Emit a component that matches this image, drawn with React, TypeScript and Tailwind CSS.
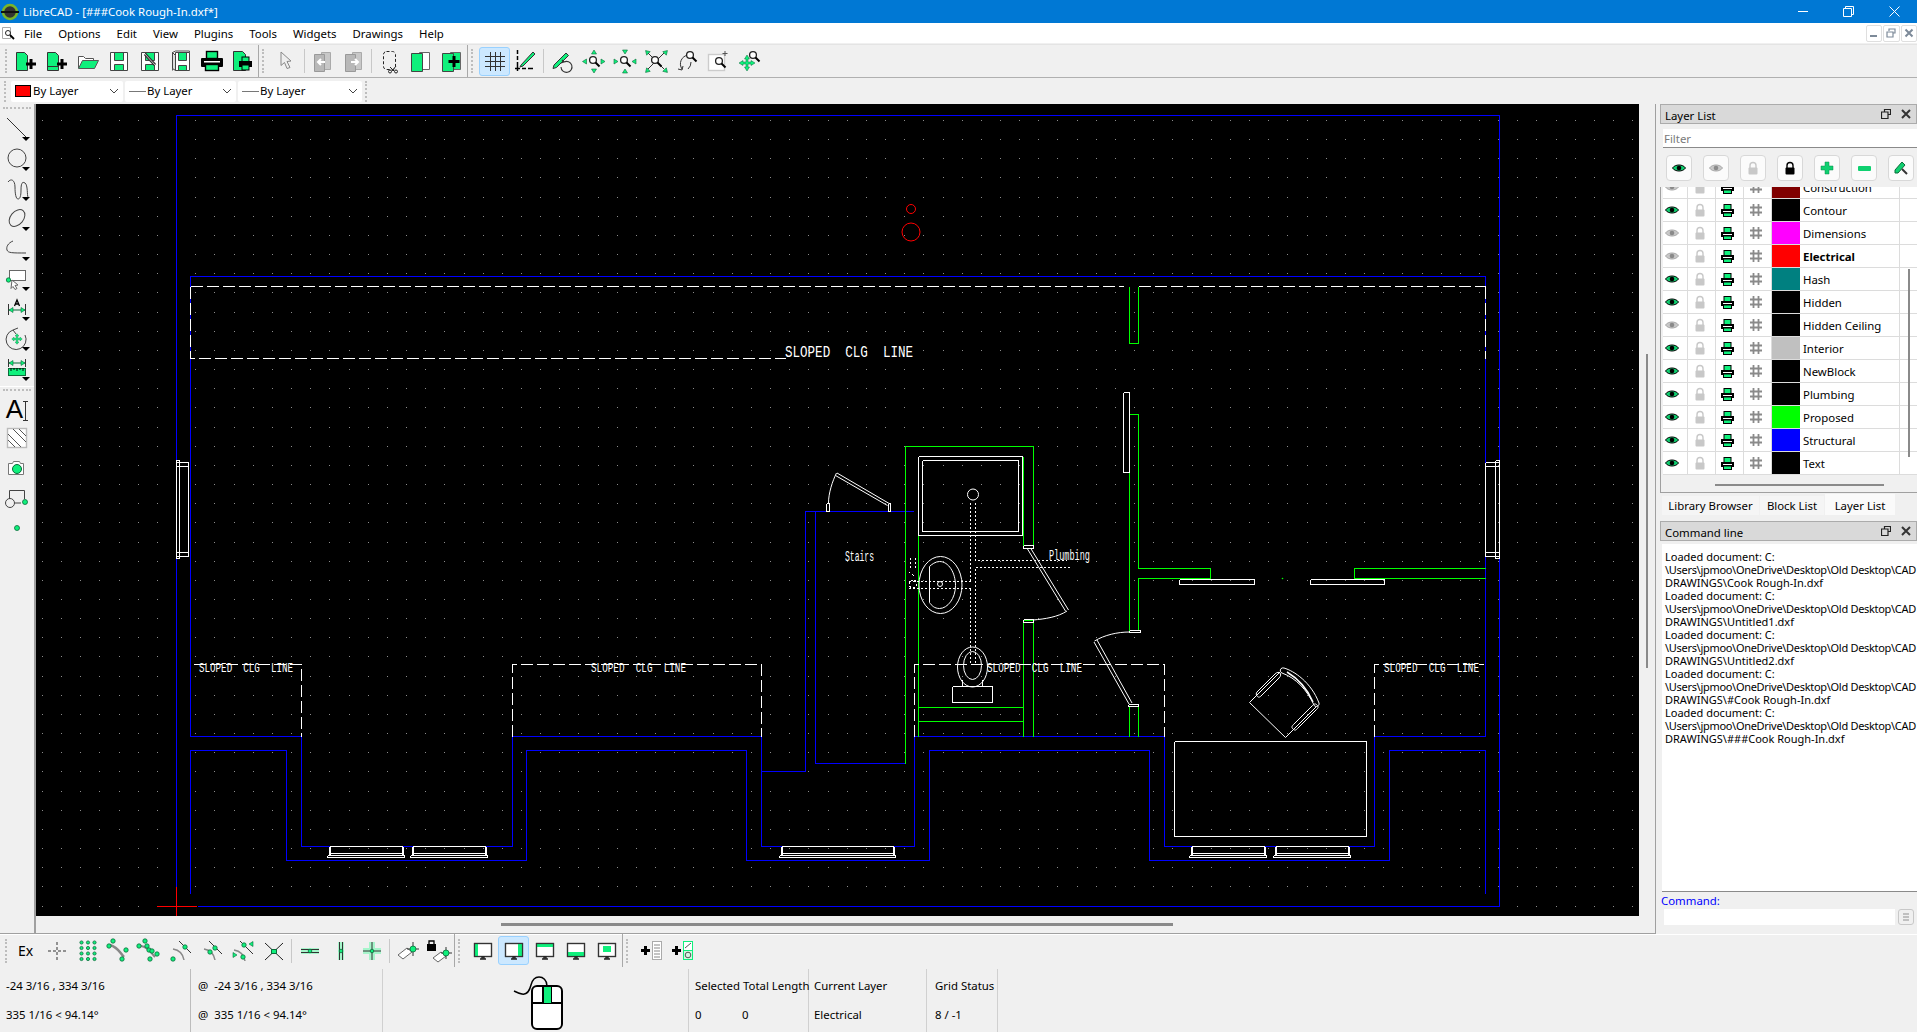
import React from 'react';

const G = '#0ff07c';
const BLUE = '#0000ff';
const GREEN = '#00ff00';
const WHITE = '#ffffff';

// ---- toolbar icons ----
const Ico = ({ children, w = 28, h = 28 }: { children: React.ReactNode; w?: number; h?: number }) => (
  <svg width={w} height={h} viewBox={`0 0 ${w} ${h}`} fill="none" className="block">
    {children}
  </svg>
);

const Dot = ({ x, y, r = 2.2 }: { x: number; y: number; r?: number }) => (
  <circle cx={x} cy={y} r={r} fill={G} stroke="#0b6b3a" strokeWidth="0.8" />
);

const Plus = ({ x = 18, y = 17 }: { x?: number; y?: number }) => (
  <path d={`M${x} ${y - 5}v10M${x - 5} ${y}h10`} stroke="#000" strokeWidth="3" />
);

const Floppy = () => (
  <>
    <path d="M5.5 5.5h17v18h-17z" fill="#fff" stroke="#444" />
    <path d="M9.5 5.5h9v8h-9z" fill={G} stroke="#444" />
    <path d="M9.5 17.5h9v6h-9z" fill={G} stroke="#444" />
  </>
);

const Mag = ({ x, y }: { x: number; y: number }) => (
  <>
    <circle cx={x} cy={y} r="3.4" fill="#fff" stroke="#222" strokeWidth="1.3" />
    <path d={`M${x + 2.5} ${y + 2.5}l4 4`} stroke="#000" strokeWidth="2" />
  </>
);

const Tri = ({ x, y, r = 0 }: { x: number; y: number; r?: number }) => (
  <path d="M-2.5 2L2.5 2L0 -2z" transform={`translate(${x} ${y}) rotate(${r})`} fill={G} stroke="#0b6b3a" strokeWidth="0.6" />
);

const Screen = ({ children }: { children?: React.ReactNode }) => (
  <>
    <rect x="5.5" y="6.5" width="17" height="13" fill="#fff" stroke="#333" strokeWidth="1.2" />
    {children}
    <rect x="5.5" y="6.5" width="17" height="13" stroke="#333" strokeWidth="1.2" />
    <path d="M11 22h6M13 20h2v2h-2z" stroke="#222" strokeWidth="1.4" />
  </>
);

const icons: Record<string, React.ReactNode> = {
  newFile: (
    <>
      <path d="M4.5 5.5h8l3 3v15h-11z" fill={G} stroke="#333" />
      <Plus x={19} y={17} />
    </>
  ),
  newTpl: (
    <>
      <path d="M4.5 5.5h8l3 3v15h-11z" fill={G} stroke="#333" />
      <path d="M4.5 19.5h11" stroke="#333" />
      <Plus x={19} y={17} />
    </>
  ),
  open: (
    <>
      <path d="M4.5 21V9.5h5l2 2h8v2" stroke="#555" fill="#fff" />
      <path d="M4.5 21.5l4-8h16l-4 8z" fill={G} stroke="#555" />
    </>
  ),
  save: <Floppy />,
  saveAs: (
    <>
      <Floppy />
      <path d="M9 7l10 11" stroke="#333" strokeWidth="3" />
      <path d="M9 7l10 11" stroke="#bbb" strokeWidth="1" />
    </>
  ),
  saveAll: (
    <>
      <path d="M5.5 5.5l3-1.5h14v1.5M5.5 5.5v18" stroke="#555" />
      <path d="M8.5 5.5h14v18h-14z" fill="#fff" stroke="#444" />
      <path d="M11.5 5.5h8v8h-8z" fill={G} stroke="#444" />
      <path d="M11.5 18.5h8v5h-8z" fill={G} stroke="#444" />
      <path d="M5.5 5.5l3 3v15l-3-2z" fill="#ddd" stroke="#444" />
    </>
  ),
  print: (
    <>
      <rect x="8.5" y="4.5" width="11" height="7" fill={G} stroke="#000" strokeWidth="1.4" />
      <rect x="3" y="11" width="22" height="9" rx="1" fill="#000" />
      <rect x="6" y="14" width="16" height="1.5" fill="#fff" />
      <rect x="7.5" y="17.5" width="13" height="6" fill={G} stroke="#000" strokeWidth="1.4" />
    </>
  ),
  preview: (
    <>
      <path d="M4.5 4.5h9l3 3v16h-12z" fill={G} stroke="#333" />
      <rect x="13" y="10" width="7" height="5" fill={G} stroke="#000" />
      <rect x="10" y="14" width="13" height="6" fill="#000" />
      <rect x="13" y="18" width="7" height="5" fill={G} stroke="#000" />
    </>
  ),
  select: <path d="M8 5l10 9-4 .5 3 6-3 1-2.500-6-3.500 3z" fill="#eee" stroke="#888" />,
  prevW: (
    <>
      <path d="M12.500 5.500h9v17h-9z" fill="#c8c8c8" stroke="#aaa" />
      <path d="M5.500 7.500h10v17h-10z" fill="#b8b8b8" stroke="#999" />
      <path d="M16 15h-6M12 12l-3 3 3 3" stroke="#fff" strokeWidth="2" />
    </>
  ),
  nextW: (
    <>
      <path d="M12.500 5.500h9v17h-9z" fill="#c8c8c8" stroke="#aaa" />
      <path d="M5.500 7.500h10v17h-10z" fill="#b8b8b8" stroke="#999" />
      <path d="M11 15h6M15 12l3 3-3 3" stroke="#fff" strokeWidth="2" />
    </>
  ),
  cut: (
    <>
      <rect x="7.500" y="4.500" width="12" height="18" rx="3" stroke="#222" strokeDasharray="3 2" />
      <path d="M14 20l4 4M20 19l-4 5" stroke="#222" />
      <circle cx="14" cy="24.500" r="1.500" stroke="#222" />
      <circle cx="20" cy="24.500" r="1.500" stroke="#222" />
    </>
  ),
  book: (
    <>
      <path d="M12.500 5.500h10v17h-10z" fill="#fff" stroke="#666" />
      <path d="M4.500 6.500h11v18h-11z" fill={G} stroke="#444" />
    </>
  ),
  bookAdd: (
    <>
      <path d="M12.500 5.500h10v17h-10z" fill={G} stroke="#666" />
      <path d="M4.500 6.500h11v18h-11z" fill={G} stroke="#444" />
      <path d="M16 9v11M10.500 14.500h11" stroke="#000" strokeWidth="3" />
    </>
  ),
  grid: <path d="M9.500 5v19M14.500 5v19M19.500 5v19M4 9.500h20M4 14.500h20M4 19.500h20" stroke="#333" />,
  ortho: (
    <>
      <path d="M5.500 3v4M5.500 9v4M5.500 15v4" stroke="#000" strokeWidth="1.5" />
      <path d="M3 21.500h5M5.500 19v5M10 21.500h4M16 21.500h5" stroke="#000" strokeWidth="1.5" />
      <path d="M9 18l12-13 2 2-12 12-3 1z" fill={G} stroke="#333" />
    </>
  ),
  redraw: (
    <>
      <path d="M5 18L17 6l2.500 2.500-12 12-3.500 1z" fill={G} stroke="#333" />
      <path d="M15 15a5.500 5.500 0 1 1-3 5M15 15l-2-2M15 15l-3 1" stroke="#333" strokeWidth="1.100" />
    </>
  ),
  zAuto: (
    <>
      <Tri x={14} y={5} />
      <Tri x={14} y={24} r={180} />
      <Tri x={4.500} y={14.500} r={-90} />
      <Tri x={23} y={14.500} r={90} />
      <Mag x={13} y={13} />
    </>
  ),
  zWin: (
    <>
      <Tri x={14} y={5} r={180} />
      <Tri x={14} y={24} />
      <Tri x={5} y={14.500} r={90} />
      <Tri x={23} y={14.500} r={-90} />
      <Mag x={13} y={13} />
    </>
  ),
  zOut: (
    <>
      <Tri x={5} y={5} r={-45} />
      <Tri x={24} y={5} r={45} />
      <Tri x={5} y={24} r={-135} />
      <Tri x={24} y={24} r={135} />
      <path d="M6 6l16 16M22 6L6 22" stroke="#333" />
      <Mag x={13} y={13} />
    </>
  ),
  zPrev: (
    <>
      <path d="M9 22a9 9 0 0 1 6-14M5 22l4 1 1-4M15 22a9 9 0 0 0 3-7" stroke="#333" />
      <Mag x={17} y={8} />
    </>
  ),
  zRect: (
    <>
      <rect x="4.500" y="7.500" width="16" height="16" fill="#fff" stroke="#ccc" strokeWidth="1.400" />
      <Mag x={15} y={14} />
      <path d="M21 4v5M18.500 6.500h5" stroke="#555" />
    </>
  ),
  zPan: (
    <>
      <path d="M12 8l2.500 4h-1.500v3h3v-1.500l4 2.500-4 2.500V17h-3v3h1.500L12 24l-2.500-4H11v-3H8v1.500L4 16l4-2.500V15h3v-3H9.500z" fill={G} stroke="#0b6b3a" strokeWidth=".5" />
      <Mag x={18} y={8} />
    </>
  ),
  // left toolbar
  line: <path d="M4 3l19 19" stroke="#333" />,
  circle: <circle cx="14" cy="13" r="9" stroke="#444" />,
  spline: <path d="M5 7c3-4 7-2 7 5s1 12 3 12 3-3 3-9 1-9 4-7 2 13 3 14" stroke="#444" />,
  ellipse: <ellipse cx="14" cy="13" rx="6.500" ry="9.500" transform="rotate(40 14 13)" stroke="#444" />,
  polyline: <path d="M10 6c-5 2-7 6-6 9s5 3 19 3" stroke="#444" />,
  selects: (
    <>
      <rect x="6.500" y="5.500" width="16" height="10" fill="#fff" stroke="#666" />
      <path d="M9 15l6 5-3 .5 2 3-2 1-2-3-2 2z" fill="#fff" stroke="#666" />
      <Dot x={5.500} y={15} />
    </>
  ),
  dim: (
    <>
      <path d="M5.500 9v11M22.500 9v11" stroke="#333" />
      <path d="M6 15h16" stroke="#0b6b3a" />
      <Tri x={8} y={15} r={-90} />
      <Tri x={20} y={15} r={90} />
      <path d="M11.500 11l2.500-6 2.500 6M12.500 9h3" stroke="#000" strokeWidth="1.300" />
    </>
  ),
  modify: (
    <>
      <path d="M10 5a10 10 0 1 0 12 5M10 5l5-2M10 5l3 4" stroke="#444" />
      <g transform="translate(3.500 3.500) scale(.75)">
        <path d="M14 7l2.500 3h-1.500v3h3v-1.500l3 2.500-3 2.500V15h-3v3h1.500L14 21l-2.500-3H13v-3h-3v1.500L7 14l3-2.500V13h3v-3h-1.500z" fill={G} stroke="#0b6b3a" strokeWidth=".5" />
      </g>
    </>
  ),
  measure: (
    <>
      <path d="M5.500 4v8M22.500 4v8" stroke="#333" />
      <path d="M6 8h16" stroke="#0b6b3a" />
      <Tri x={8} y={8} r={-90} />
      <Tri x={20} y={8} r={90} />
      <rect x="5.500" y="13.500" width="17" height="7" fill={G} stroke="#0b6b3a" />
      <path d="M8 13v3M11 13v2M14 13v3M17 13v2M20 13v3" stroke="#000" />
    </>
  ),
  hatch: (
    <>
      <rect x="4.500" y="4.500" width="19" height="19" fill="#fff" stroke="#bbb" strokeWidth="1.400" />
      <path d="M5 10l13 13M5 16l7 7M10 5l13 13M16 5l7 7" stroke="#555" />
    </>
  ),
  image: (
    <>
      <path d="M5.500 9.500h4l1-2h6l1 2h3v11h-15z" fill="#fff" stroke="#777" />
      <circle cx="14" cy="15" r="4.500" fill={G} stroke="#0b6b3a" />
    </>
  ),
  block: (
    <>
      <path d="M6.500 15V6.500h15V15M12 19h6" stroke="#444" />
      <circle cx="7" cy="19" r="4.500" stroke="#444" />
      <Dot x={22} y={18} r={2.500} />
    </>
  ),
  point: <Dot x={14} y={14} r={2.500} />,
  // snap bar
  free: <path d="M14 5v3M14 10v3M14 15v3M14 20v3M5 14h3M10 14h3M15 14h3M20 14h3" stroke="#333" />,
  snapGrid: (
    <>
      {[7.5, 14, 20.5].flatMap((x) => [5.5, 11, 16.5, 22].map((y) => <Dot key={`${x}-${y}`} x={x} y={y} r={1.6} />))}
    </>
  ),
  endPt: (
    <>
      <path d="M5 8c8 2 10 8 14 12" stroke="#888" strokeWidth="2.500" />
      <Dot x={8} y={4} />
      <Dot x={4} y={9} />
      <Dot x={21} y={13} />
      <Dot x={17} y={22} />
    </>
  ),
  onEnt: (
    <>
      <path d="M5 9c8 1 10 7 14 11" stroke="#888" strokeWidth="2" />
      <Dot x={9} y={4} />
      <Dot x={3} y={9} />
      <Dot x={11} y={9} />
      <Dot x={13} y={13} />
      <Dot x={16} y={14} />
      <Dot x={21} y={17} />
      <Dot x={14} y={22} />
    </>
  ),
  center: (
    <>
      <path d="M6 12c6 1 10 5 11 11" stroke="#888" strokeWidth="1.500" />
      <path d="M12 4l12 12" stroke="#333" />
      <Dot x={18} y={10} />
      <Dot x={6} y={22} />
    </>
  ),
  mid: (
    <>
      <path d="M6 12c6 1 10 5 11 11" stroke="#888" strokeWidth="1.500" />
      <path d="M11 4l13 13" stroke="#333" />
      <Dot x={17} y={11} />
      <Dot x={12} y={15} />
    </>
  ),
  dist: (
    <>
      <path d="M5 13c6 1 10 5 11 11" stroke="#888" strokeWidth="1.500" />
      <path d="M11 4l13 13" stroke="#333" />
      <Dot x={15} y={8} />
      <Dot x={14} y={20} />
      <Tri x={22} y={7} r={-90} />
      <Tri x={6} y={18} r={90} />
    </>
  ),
  cross: (
    <>
      <path d="M5 6l18 17M23 6L5 23" stroke="#222" />
      <rect x="11.500" y="12.500" width="5" height="4" fill={G} stroke="#0b6b3a" />
    </>
  ),
  lockH: (
    <>
      <path d="M5 11h18v6H5z" fill="#a6f5cb" />
      <path d="M5 12.500h18M5 15.500h18" stroke="#333" />
      <Dot x={14} y={14} r={1.800} />
    </>
  ),
  lockV: (
    <>
      <path d="M11 5h6v18h-6z" fill="#a6f5cb" />
      <path d="M12.500 5v18M15.500 5v18" stroke="#333" />
      <Dot x={14} y={14} r={1.800} />
    </>
  ),
  lockO: (
    <>
      <path d="M5 11h18v6H5zM11 5h6v18h-6z" fill="#a6f5cb" />
      <path d="M5 14h18M14 5v18" stroke="#333" />
      <Dot x={14} y={14} r={1.800} />
    </>
  ),
  relZ: (
    <>
      <path d="M4 18l9-7 5 4-9 7z" fill="#fff" stroke="#666" />
      <path d="M13 12h12M19 5v14" stroke="#333" />
      <Dot x={19} y={12} r={3} />
    </>
  ),
  lockZ: (
    <>
      <rect x="2" y="7" width="9" height="7" fill="#000" />
      <path d="M4 7V4h5v3" stroke="#000" strokeWidth="1.300" />
      <path d="M8 21l8-6 5 4-8 6z" fill="#fff" stroke="#666" />
      <path d="M16 16h11M21 10v12" stroke="#333" />
      <Dot x={21} y={16} r={3} />
    </>
  ),
  scrLeft: <Screen><rect x="6" y="7" width="3" height="12" fill={G} /></Screen>,
  scrRight: <Screen><rect x="18" y="7" width="4" height="12" fill={G} /></Screen>,
  scrTop: <Screen><rect x="6" y="7" width="16" height="3" fill={G} /></Screen>,
  scrBottom: <Screen><rect x="6" y="15" width="16" height="4" fill={G} /></Screen>,
  scrCenter: <Screen><rect x="10" y="9" width="8" height="6" fill={G} /></Screen>,
  addList: (
    <>
      <path d="M3 13.500h9M7.500 9v9" stroke="#000" strokeWidth="3" />
      <rect x="14.500" y="4.500" width="9" height="18" fill="#fff" stroke="#aaa" />
      <path d="M16 8h6M16 11h6M16 14h6M16 17h6M16 20h6" stroke="#888" />
    </>
  ),
  addDraw: (
    <>
      <path d="M3 13.500h9M7.500 9v9" stroke="#000" strokeWidth="3" />
      <rect x="14.500" y="4.500" width="9" height="9" fill="#fff" stroke={G} />
      <rect x="14.500" y="13.500" width="9" height="9" fill="#d4f5e2" stroke={G} />
      <path d="M16 11l6-5" stroke="#555" />
      <circle cx="19" cy="18" r="2.800" stroke="#555" />
    </>
  ),
};

const Btn = ({ name, active }: { name: string; active?: boolean }) => (
  <div
    className={`flex h-[29px] w-[31px] items-center justify-center rounded-[3px] border ${
      active ? 'border-[#99d1ff] bg-[#cce8ff]' : 'border-transparent'
    }`}
  >
    <Ico>{icons[name]}</Ico>
  </div>
);

const Handle = () => <div className="mx-[3px] h-[24px] w-0 border-l-2 border-dotted border-[#bdbdbd]" />;
const Sep = () => <div className="mx-[2px] h-[24px] w-px bg-[#c8c8c8]" />;
const Bar = () => <div className="h-[33px] w-px bg-[#a8a8a8]" />;

// ---- CAD canvas ----
type Pt = [number, number];
const toD = (pts: Pt[]) =>
  pts.map(([x, y], i) => `${i ? 'L' : 'M'}${Math.round(x) + 0.5} ${Math.round(y) + 0.5}`).join('');
const rect = (x1: number, y1: number, x2: number, y2: number): Pt[] => [
  [x1, y1],
  [x2, y1],
  [x2, y2],
  [x1, y2],
  [x1, y1],
];

const blueLines: Pt[][] = [
  [[197, 906], [1499, 906], [1499, 115], [176, 115], [176, 886]],
  [[190, 736], [190, 276], [1485, 276], [1485, 736]],
  [[190, 736], [301, 736], [301, 846], [512, 846], [512, 736], [761, 736], [761, 846], [914, 846], [914, 736], [1164, 736], [1164, 846], [1374, 846], [1374, 736], [1485, 736]],
  [[190, 893], [190, 750], [286, 750], [286, 860], [526, 860], [526, 750], [746, 750], [746, 860], [929, 860], [929, 750], [1149, 750], [1149, 860], [1389, 860], [1389, 750], [1485, 750], [1485, 893]],
  [[761, 771], [805, 771], [805, 511], [913, 511]],
  [[815, 511], [815, 763], [905, 763]],
];

const greenLines: Pt[][] = [
  [[905, 763], [905, 446], [1033, 446], [1033, 545]],
  [[918, 456], [918, 736]],
  [[1023, 456], [1023, 545]],
  [[1023, 736], [1023, 620], [1033, 620], [1033, 736]],
  [[918, 707], [1023, 707]],
  [[918, 721], [1023, 721]],
  [[1129, 414], [1138, 414], [1138, 568], [1210, 568], [1210, 578], [1138, 578], [1138, 630]],
  [[1129, 447], [1129, 630]],
  [[1129, 706], [1129, 736]],
  [[1138, 706], [1138, 736]],
  [[1129, 286], [1129, 343], [1138, 343], [1138, 286]],
  [[1485, 568], [1354, 568], [1354, 578], [1485, 578]],
];

const whiteLines: Pt[][] = [
  rect(1123, 392, 1129, 472),
  rect(1179, 579, 1254, 584),
  rect(1310, 579, 1384, 584),
  rect(1174, 741, 1366, 836),
  // tub
  rect(918, 456, 1022, 535),
  rect(922, 460, 1018, 531),
  // toilet tank
  rect(952, 686, 992, 702),
  // hinges
  rect(826, 503, 829, 511),
  rect(888, 503, 890, 511),
  rect(1023, 545, 1033, 548),
  rect(1023, 619, 1033, 622),
  rect(1129, 630, 1140, 632),
  rect(1128, 704, 1138, 706),
  // side windows
  rect(1485, 462, 1495, 556),
  rect(1495, 460, 1499, 558),
  rect(1485, 462, 1499, 466),
  rect(1485, 552, 1499, 556),
  rect(188, 462, 179, 556),
  rect(179, 460, 176, 558),
  rect(176, 462, 188, 466),
  rect(176, 552, 188, 556),
];

const bottomWindows: [number, number][] = [
  [327, 404],
  [410, 487],
  [779, 895],
  [1189, 1266],
  [1273, 1350],
];

const gridDots = (() => {
  let d = '';
  for (let i = 0; i < 84; i++) {
    for (let j = 0; j < 42; j++) {
      d += `M${Math.round(42 + 19.16 * i)} ${Math.round(120 + 19.16 * j)}h1v1h-1z`;
    }
  }
  return d;
})();

const CadLabel = ({ x, y, w, size = 13 }: { x: number; y: number; w: number; size?: number }) => (
  <text
    x={x}
    y={y}
    textLength={w}
    lengthAdjust="spacingAndGlyphs"
    fill={WHITE}
    fontSize={size}
    className="whitespace-pre font-['Liberation_Mono',monospace]"
  >
    {'SLOPED  CLG  LINE'}
  </text>
);

const Drawing = () => (
  <svg width="1603" height="812" viewBox="36 104 1603 812" className="block bg-black">
    <path d={gridDots} fill="#8c8c8c" shapeRendering="crispEdges" />
    <g fill="none" shapeRendering="crispEdges">
      {blueLines.map((p, i) => (
        <path key={i} d={toD(p)} stroke={BLUE} />
      ))}
      {greenLines.map((p, i) => (
        <path key={i} d={toD(p)} stroke={GREEN} />
      ))}
      {whiteLines.map((p, i) => (
        <path key={i} d={toD(p)} stroke={WHITE} />
      ))}
      {bottomWindows.map(([a, b], i) => (
        <g key={i} stroke={WHITE}>
          <path d={toD([[a + 2, 846], [b - 2, 846]])} />
          <path d={toD([[a + 2, 846], [a + 2, 855]])} strokeWidth="2" />
          <path d={toD([[b - 2, 846], [b - 2, 855]])} strokeWidth="2" />
          <path d={toD([[a + 2, 853], [b - 2, 853]])} />
          <path d={toD(rect(a, 855, b, 857))} />
        </g>
      ))}
      {/* dashed ceiling lines */}
      <g stroke={WHITE} strokeDasharray="12 4">
        <path d={toD([[190, 286], [1123, 286]])} />
        <path d={toD([[1138, 286], [1485, 286]])} />
        <path d={toD([[190, 286], [190, 358], [785, 358]])} />
        <path d={toD([[1485, 286], [1485, 358]])} />
        <path d={toD([[193, 664], [301, 664], [301, 736]])} />
        <path d={toD([[512, 736], [512, 664], [761, 664], [761, 736]])} />
        <path d={toD([[914, 736], [914, 664], [1164, 664], [1164, 736]])} />
        <path d={toD([[1374, 736], [1374, 664], [1483, 664]])} />
      </g>
      {/* plumbing */}
      <g stroke={WHITE} strokeDasharray="2 2">
        <path d={toD([[970, 502], [970, 580]])} />
        <path d={toD([[970, 588], [970, 664]])} />
        <path d={toD([[975, 502], [975, 560], [1066, 560]])} />
        <path d={toD([[975, 568], [975, 664]])} />
        <path d={toD([[975, 567], [1071, 567]])} />
        <path d={toD([[908, 581], [970, 581]])} />
        <path d={toD([[908, 588], [970, 588]])} />
        <circle cx="913" cy="584" r="4" />
        <path d="M910 558v10M915 558v10M909 572l5 4" />
      </g>
    </g>
    <g fill="none" stroke={WHITE}>
      <circle cx="973" cy="494.500" r="5.500" />
      {/* sink */}
      <ellipse cx="940.500" cy="585" rx="21.500" ry="28.500" />
      <path d="M929.500 566.500c2-2 6-5 10-5 9 0 16 11 16 24s-8 23-16 23c-5 0-8-3-10-6z" />
      <circle cx="940" cy="584" r="2.500" />
      {/* toilet */}
      <ellipse cx="972.500" cy="667" rx="15" ry="20" />
      <ellipse cx="972.500" cy="665.500" rx="9" ry="14" />
      <path d="M962.500 680v6M982.500 680v6" />
      {/* doors */}
      <path d="M837 473l53 31M835.500 475.500l52 30" />
      <path d="M828.500 503c0-10 4-22 8-30" />
      <path d="M1030.500 548l38 62M1027.500 549l38 62" />
      <path d="M1033 620c12-1 25-3 34-9" />
      <path d="M1129.500 632c-12 0-25 3-35 9" />
      <path d="M1094 642l35 62M1097 640l35 63" />
      {/* chair */}
      <path d="M1280 672l-30.500 30.500 36 35 31-31" />
      <path d="M1257 692l18-18c2-2 4-2 5-1s1 3-1 5l-18 18c-2 2-3 1-4 0s-1-3 0-4z" />
      <path d="M1316 710l-18 18c-2 2-3 3-5 1s-1-3 1-5l18-18c2-2 3-3 5-1s1 3-1 5z" />
      <path d="M1284 668c10 3 27 14 35 35 1 3-4 5-5 2-7-15-18-27-32-32-3-1-2-6 2-5z" />
      <path d="M1287 672c10 6 20 16 26 30" strokeWidth="1.500" />
    </g>
    <circle cx="911" cy="209" r="4.500" fill="none" stroke="#ff0000" />
    <circle cx="911" cy="232" r="9" fill="none" stroke="#ff0000" />
    <path d="M177 886.500v30M157 906.500h40" stroke="#ff0000" shapeRendering="crispEdges" transform="translate(-.5 0)" />
    <circle cx="1282.500" cy="578.500" r=".8" fill={GREEN} />
    <CadLabel x={785} y={357} w={128} size={16} />
    <CadLabel x={199} y={672} w={94} />
    <CadLabel x={591} y={672} w={95} />
    <CadLabel x={987} y={672} w={95} />
    <CadLabel x={1384} y={672} w={95} />
    <text x="845" y="561" fill={WHITE} fontSize="14" textLength="29" lengthAdjust="spacingAndGlyphs" className="font-['Liberation_Mono',monospace]">
      Stairs
    </text>
    <text x="1049" y="560" fill={WHITE} fontSize="14" textLength="41" lengthAdjust="spacingAndGlyphs" className="font-['Liberation_Mono',monospace]">
      Plumbing
    </text>
  </svg>
);

// ---- layer list ----
const EyeIcon = ({ on }: { on: boolean }) => (
  <svg width="14" height="10" viewBox="0 0 14 10">
    <path d="M0.500 5C3 1 11 1 13.500 5 11 9 3 9 .5 5z" fill={on ? '#0fd070' : '#c8c8c8'} stroke={on ? '#000' : '#a8a8a8'} />
    <circle cx="7" cy="5" r="2.300" fill={on ? '#000' : '#8a8a8a'} />
  </svg>
);

const Padlock = ({ color = '#c8c8c8', size = 14 }: { color?: string; size?: number }) => (
  <svg width={size} height={size} viewBox="0 0 14 14">
    <path d="M4 7V4.500a3 3 0 0 1 6 0V7" fill="none" stroke={color} strokeWidth="1.400" />
    <rect x="2.500" y="6.500" width="9" height="7" rx="1" fill={color} />
  </svg>
);

const PrinterIcon = () => (
  <svg width="13" height="13" viewBox="0 0 13 13">
    <rect x="3" y="0.500" width="7" height="5" fill={G} stroke="#000" />
    <rect x="0" y="5" width="13" height="5" fill="#000" />
    <rect x="2" y="7" width="9" height="1" fill="#fff" />
    <rect x="2.500" y="9" width="8" height="3.500" fill={G} stroke="#000" />
  </svg>
);

const HashIcon = () => (
  <svg width="14" height="14" viewBox="0 0 14 14">
    <path d="M4.500 1v12M9.500 1v12M1 4.500h12M1 9.500h12" stroke="#8a8a8a" strokeWidth="1.800" />
  </svg>
);

const layers: { name: string; color: string; on: boolean; bold?: boolean }[] = [
  { name: 'Construction', color: '#800000', on: false },
  { name: 'Contour', color: '#000000', on: true },
  { name: 'Dimensions', color: '#ff00ff', on: false },
  { name: 'Electrical', color: '#ff0000', on: false, bold: true },
  { name: 'Hash', color: '#008080', on: true },
  { name: 'Hidden', color: '#000000', on: true },
  { name: 'Hidden Ceiling', color: '#000000', on: false },
  { name: 'Interior', color: '#c0c0c0', on: true },
  { name: 'NewBlock', color: '#000000', on: true },
  { name: 'Plumbing', color: '#000000', on: true },
  { name: 'Proposed', color: '#00ff00', on: true },
  { name: 'Structural', color: '#0000ff', on: true },
  { name: 'Text', color: '#000000', on: true },
];

const LayerRow = ({ name, color, on, bold }: { name: string; color: string; on: boolean; bold?: boolean }) => {
  const cell = 'flex h-full w-[28px] items-center justify-center border-r border-[#dcdcdc] pr-[4px]';
  return (
    <div className="flex h-[23px] shrink-0 items-stretch border-b border-[#dcdcdc] bg-white">
      <div className="flex h-full w-[25px] items-center border-r border-[#dcdcdc] pl-[2px]">
        <EyeIcon on={on} />
      </div>
      <div className={cell}>
        <Padlock />
      </div>
      <div className={cell}>
        <PrinterIcon />
      </div>
      <div className={cell}>
        <HashIcon />
      </div>
      <div className="h-full w-[28px]" style={{ backgroundColor: color }} />
      <div className={`flex w-[100px] items-center border-r border-[#dcdcdc] pl-[3px] pt-[2px] ${bold ? 'font-bold' : ''}`}>{name}</div>
    </div>
  );
};

const DockTitle = ({ title }: { title: string }) => (
  <div className="flex h-[20px] items-center justify-between border border-[#ababab] bg-[#d9d9d9] pl-[4px] pr-[5px]">
    <span className="pt-[3px]">{title}</span>
    <div className="flex items-center gap-[10px]">
      <svg width="10" height="10" viewBox="0 0 10 10" fill="none" stroke="#222" strokeWidth="1.200">
        <path d="M3.500 2.500v-2h6v5h-2M.5 3h6.500v6.500H.5z" />
      </svg>
      <svg width="10" height="10" viewBox="0 0 10 10" stroke="#333" strokeWidth="2">
        <path d="M1 1l8 8M9 1l-8 8" />
      </svg>
    </div>
  </div>
);

const dockBtn = 'flex h-[26px] w-[26px] items-center justify-center rounded-[4px] border border-[#d8d8d8] bg-[#fbfbfb]';

const logLines = [
  'Loaded document: C:',
  '\\Users\\jpmoo\\OneDrive\\Desktop\\Old Desktop\\CAD',
  'DRAWINGS\\Cook Rough-In.dxf',
  'Loaded document: C:',
  '\\Users\\jpmoo\\OneDrive\\Desktop\\Old Desktop\\CAD',
  'DRAWINGS\\Untitled1.dxf',
  'Loaded document: C:',
  '\\Users\\jpmoo\\OneDrive\\Desktop\\Old Desktop\\CAD',
  'DRAWINGS\\Untitled2.dxf',
  'Loaded document: C:',
  '\\Users\\jpmoo\\OneDrive\\Desktop\\Old Desktop\\CAD',
  'DRAWINGS\\#Cook Rough-In.dxf',
  'Loaded document: C:',
  '\\Users\\jpmoo\\OneDrive\\Desktop\\Old Desktop\\CAD',
  'DRAWINGS\\###Cook Rough-In.dxf',
];

const menuItems = ['File', 'Options', 'Edit', 'View', 'Plugins', 'Tools', 'Widgets', 'Drawings', 'Help'];

const Combo = ({ w, swatch, label }: { w: string; swatch?: boolean; label: string }) => (
  <div className={`flex h-[21px] items-center rounded-[2px] bg-white pl-[4px] pr-[4px] ${w}`}>
    {swatch ? (
      <span className="mr-[2px] h-[12px] w-[16px] border border-black bg-[#ff0000]" />
    ) : (
      <span className="mr-[1px] h-px w-[17px] bg-[#777]" />
    )}
    <span className="flex-1">{label}</span>
    <svg width="10" height="6" viewBox="0 0 10 6" fill="none" stroke="#444">
      <path d="M1 1l4 4 4-4" />
    </svg>
  </div>
);

const sideTop = ['line', 'circle', 'spline', 'ellipse', 'polyline', 'selects', 'dim', 'modify', 'measure'];
const sideBottom = ['hatch', 'image', 'block', 'point'];

const SideBtn = ({ name, arrow }: { name: string; arrow?: boolean }) => (
  <div className="relative flex h-[30px] items-center justify-center">
    <Ico>{icons[name]}</Ico>
    {arrow && <span className="absolute bottom-[3px] right-[4px] h-0 w-0 border-x-[4px] border-t-[4px] border-x-transparent border-t-black" />}
  </div>
);

export default function App() {
  return (
    <div className="flex h-[1032px] w-[1917px] flex-col overflow-hidden bg-[#f0f0f0] font-['Noto_Sans','Liberation_Sans',sans-serif] text-[11.400px] leading-none text-black">
      {/* title bar */}
      <div className="flex h-[23px] shrink-0 items-center bg-[#0078d4] text-white">
        <svg width="18" height="18" viewBox="0 0 18 18" className="ml-[1px] mr-[4px]">
          <circle cx="9" cy="9" r="7" fill="#333" stroke="#7ab52a" strokeWidth="2.500" />
          <path d="M0 9h18" stroke="#111" strokeWidth="2" />
        </svg>
        <span>LibreCAD - [###Cook Rough-In.dxf*]</span>
        <div className="ml-auto flex items-center gap-[35px] pr-[17px]">
          <span className="h-px w-[10px] bg-white" />
          <svg width="11" height="11" viewBox="0 0 11 11" fill="none" stroke="#fff">
            <path d="M2.500 2.500V.5h8v8H8.500M.5 2.500h8v8h-8z" />
          </svg>
          <svg width="11" height="11" viewBox="0 0 11 11" fill="none" stroke="#fff">
            <path d="M.5.5l10 10M10.500.5l-10 10" />
          </svg>
        </div>
      </div>
      {/* menu bar */}
      <div className="flex h-[20px] shrink-0 items-center bg-white">
        <svg width="14" height="14" viewBox="0 0 14 14" className="ml-[1px] mr-[1px]" fill="none">
          <path d="M1.500 1.500h8v11h-8z" stroke="#aaa" />
          <circle cx="7" cy="7" r="2.500" stroke="#222" />
          <path d="M9 9l4 4" stroke="#000" strokeWidth="1.800" />
        </svg>
        {menuItems.map((m) => (
          <span key={m} className="px-[8px] pt-[1px]">
            {m}
          </span>
        ))}
        <div className="ml-auto flex items-center gap-[1px]">
          {['min', 'max', 'close'].map((k) => (
            <div key={k} className="flex h-[17px] w-[16.500px] items-center justify-center rounded-[2px] border border-[#dfdfdf]">
              <svg width="10" height="10" viewBox="0 0 10 10" fill="none" stroke="#7d8a99" strokeWidth={k === 'max' ? 1.2 : 2}>
                {k === 'min' && <path d="M1 8h7" />}
                {k === 'max' && <path d="M3 3V1h6v4H7M1 4h6v5H1z" />}
                {k === 'close' && <path d="M1.500 1.500l7 7M8.500 1.500l-7 7" />}
              </svg>
            </div>
          ))}
        </div>
      </div>
      {/* main toolbar */}
      <div className="mt-px flex h-[33px] shrink-0 items-center border-t border-[#e4e4e4] pl-[2px]">
        <Handle />
        <Btn name="newFile" />
        <Btn name="newTpl" />
        <Btn name="open" />
        <Btn name="save" />
        <Btn name="saveAs" />
        <Btn name="saveAll" />
        <Btn name="print" />
        <Btn name="preview" />
        <Bar />
        <Handle />
        <div className="w-[4px]" />
        <Btn name="select" />
        <Sep />
        <Btn name="prevW" />
        <Btn name="nextW" />
        <Sep />
        <Btn name="cut" />
        <Btn name="book" />
        <Btn name="bookAdd" />
        <Bar />
        <Handle />
        <div className="w-[3px]" />
        <Btn name="grid" active />
        <Btn name="ortho" />
        <Sep />
        <div className="w-[1px]" />
        <Btn name="redraw" />
        <Btn name="zAuto" />
        <Btn name="zWin" />
        <Btn name="zOut" />
        <Btn name="zPrev" />
        <Btn name="zRect" />
        <Btn name="zPan" />
      </div>
      {/* pen toolbar */}
      <div className="flex h-[27px] shrink-0 items-center border-t border-[#b0b0b0] pl-[4px]">
        <div className="mr-[2px] h-[21px] w-0 border-l-2 border-dotted border-[#bdbdbd]" />
        <div className="ml-[3px] flex gap-[2px]">
          <Combo w="w-[112px]" swatch label="By Layer" />
          <Combo w="w-[111px]" label="By Layer" />
          <Combo w="w-[124px]" label="By Layer" />
        </div>
        <div className="ml-[3px] h-[21px] w-0 border-l-2 border-dotted border-[#bdbdbd]" />
      </div>
      {/* work area */}
      <div className="flex h-[830px] shrink-0">
        <div className="flex w-[1656px] shrink-0 border-b border-r border-[#a0a0a0]">
          {/* left tools */}
          <div className="flex w-[36px] shrink-0 flex-col border-r-2 border-[#a0a0a0] pt-[3px]">
            <div className="mx-[3px] h-[3px] border-t-2 border-dotted border-[#bdbdbd]" />
            <div className="pt-[4px]">
              {sideTop.map((n) => (
                <SideBtn key={n} name={n} arrow />
              ))}
            </div>
            <div className="mt-[2px] border-t border-white" />
            <div className="mx-[3px] mt-[2px] h-[4px] border-t-2 border-dotted border-[#bdbdbd]" />
            <div className="flex h-[30px] items-end justify-center pb-[1px]">
              <span className="font-['Liberation_Sans',sans-serif] text-[26px] leading-none">A</span>
              <span className="mb-[1px] h-[20px] w-[5px] border-y border-[#333] bg-[linear-gradient(#333,#333)] bg-[length:1px_100%] bg-center bg-no-repeat" />
            </div>
            {sideBottom.map((n) => (
              <SideBtn key={n} name={n} />
            ))}
          </div>
          {/* drawing + scrollbars */}
          <div className="flex min-w-0 flex-1 flex-col">
            <div className="flex h-[812px]">
              <Drawing />
              <div className="flex flex-1 justify-center pt-[250px]">
                <div className="h-[314px] w-[2px] bg-[#8a8a8a]" />
              </div>
            </div>
            <div className="pl-[465px] pt-[7px]">
              <div className="h-[3px] w-[672px] bg-[#8a8a8a]" />
            </div>
          </div>
        </div>
        {/* right docks */}
        <div className="ml-[4px] flex min-w-0 flex-1 flex-col">
          <DockTitle title="Layer List" />
          <div className="ml-[3px] mt-[5px] flex h-[19px] items-center border-b border-[#8a8a8a] bg-white pl-[1px] pt-[1px] text-[#7a7a7a]">Filter</div>
          <div className="flex gap-[11px] pl-[6px] pt-[7px]">
            <div className={dockBtn}>
              <EyeIcon on />
            </div>
            <div className={dockBtn}>
              <EyeIcon on={false} />
            </div>
            <div className={dockBtn}>
              <Padlock />
            </div>
            <div className={dockBtn}>
              <Padlock color="#000" />
            </div>
            <div className={dockBtn}>
              <svg width="14" height="14" viewBox="0 0 14 14">
                <path d="M5 1h4v4h4v4H9v4H5V9H1V5h4z" fill="#0fd070" stroke="#0b8a4a" strokeWidth=".5" />
              </svg>
            </div>
            <div className={dockBtn}>
              <span className="h-[5px] w-[13px] rounded-[1px] bg-[#0fd070]" />
            </div>
            <div className={dockBtn}>
              <svg width="16" height="16" viewBox="0 0 16 16">
                <path d="M2 10l7-8 3 3-7 8H2z" fill="#0fd070" stroke="#0b6b3a" />
                <path d="M9 9l5 5" stroke="#333" strokeWidth="2" />
              </svg>
            </div>
          </div>
          <div className="relative mt-[6px] h-[306px] overflow-hidden border-b border-l border-[#a0a0a0] pl-[2px]">
            <div className="h-px bg-[#a0a0a0]" />
            <div className="mt-[-12px] flex h-[300px] flex-col overflow-hidden">
              {layers.map((l) => (
                <LayerRow key={l.name} {...l} />
              ))}
            </div>
            <div className="absolute left-[247px] top-[82px] h-[188px] w-[2px] bg-[#8a8a8a]" />
            <div className="absolute bottom-[6px] left-[54px] h-[2px] w-[169px] bg-[#8a8a8a]" />
          </div>
          {/* tabs */}
          <div className="flex h-[22px] items-end pl-[2px]">
            <div className="mr-[1px] flex h-[19px] w-[97px] items-center justify-center bg-[#f5f5f5] pt-[1px]">Library Browser</div>
            <div className="mr-[1px] flex h-[19px] w-[64px] items-center justify-center bg-[#f5f5f5] pt-[1px]">Block List</div>
            <div className="flex h-[21px] w-[70px] items-center justify-center bg-[#fafafa] pt-[2px]">Layer List</div>
          </div>
          <div className="mt-[6px]">
            <DockTitle title="Command line" />
          </div>
          <div className="ml-[2px] mt-[3px] h-[348px] border-b border-[#8a8a8a] bg-white pl-[3px] pt-[6px] text-[11px] leading-[13px]">
            {logLines.map((t, i) => (
              <div key={i} className={`whitespace-nowrap ${t.startsWith('\\') ? 'tracking-[-0.3px]' : ''}`}>
                {t}
              </div>
            ))}
          </div>
          <div className="pl-[1px] pt-[3px] text-[#0000ff]">Command:</div>
          <div className="flex items-center gap-[3px] pl-[4px] pt-[3px]">
            <div className="h-[16px] w-[231px] bg-white" />
            <div className="flex h-[16px] w-[16px] items-center justify-center rounded-[3px] border border-[#c8c8c8]">
              <svg width="8" height="8" viewBox="0 0 8 8" stroke="#b0b0b0" strokeWidth="1.400">
                <path d="M1 1h6M1 4h6M1 7h6" />
              </svg>
            </div>
          </div>
        </div>
      </div>
      {/* snap / screen toolbars */}
      <div className="flex h-[35px] shrink-0 items-center border-t border-white pb-[3px] pl-[2px]">
        <Handle />
        <div className="flex h-[29px] w-[31px] items-center justify-center text-[14px]">Ex</div>
        <Btn name="free" />
        <Btn name="snapGrid" />
        <Btn name="endPt" />
        <Btn name="onEnt" />
        <Btn name="center" />
        <Btn name="mid" />
        <Btn name="dist" />
        <Btn name="cross" />
        <Sep />
        <Btn name="lockH" />
        <Btn name="lockV" />
        <Btn name="lockO" />
        <Sep />
        <Btn name="relZ" />
        <Btn name="lockZ" />
        <Bar />
        <Handle />
        <div className="w-[4px]" />
        <Btn name="scrLeft" />
        <Btn name="scrRight" active />
        <Btn name="scrTop" />
        <Btn name="scrBottom" />
        <Btn name="scrCenter" />
        <Bar />
        <Handle />
        <div className="w-[5px]" />
        <Btn name="addList" />
        <Btn name="addDraw" />
      </div>
      {/* status bar */}
      <div className="flex h-[63px] shrink-0">
        <div className="flex w-[191px] flex-col justify-between border-r border-[#bcbcbc] pb-[12px] pl-[6px] pt-[11px]">
          <span>-24 3/16 , 334 3/16</span>
          <span>335 1/16 &lt; 94.14°</span>
        </div>
        <div className="flex w-[192px] flex-col justify-between border-r border-[#d0d0d0] pb-[12px] pl-[7px] pt-[11px]">
          <span>@&nbsp; -24 3/16 , 334 3/16</span>
          <span>@&nbsp; 335 1/16 &lt; 94.14°</span>
        </div>
        <div className="flex w-[306px] items-end justify-center border-r border-[#d0d0d0] pl-[4px]">
          <svg width="50" height="62" viewBox="0 0 50 62" fill="none">
            <path d="M34 16c0-6-4-9-8-9-5 0-7 4-8 8-1.500 6-4 10-9 9-3-.5-6-2-8-3" stroke="#000" strokeWidth="1.500" />
            <rect x="19" y="16" width="30" height="43" rx="5" fill="#fff" stroke="#000" strokeWidth="2" />
            <path d="M19 33h30M30 16v17M38 16v17" stroke="#000" strokeWidth="2" />
            <rect x="31" y="17" width="7" height="16" fill={G} />
          </svg>
        </div>
        <div className="flex w-[120px] flex-col justify-between border-r border-[#d0d0d0] pb-[12px] pl-[6px] pt-[11px]">
          <span className="whitespace-nowrap">Selected Total Length</span>
          <div className="flex">
            <span className="w-[47px]">0</span>
            <span>0</span>
          </div>
        </div>
        <div className="flex w-[118px] flex-col justify-between border-r border-[#d0d0d0] pb-[12px] pl-[5px] pt-[11px]">
          <span>Current Layer</span>
          <span>Electrical</span>
        </div>
        <div className="flex w-[71px] flex-col justify-between border-r border-[#d0d0d0] pb-[12px] pl-[8px] pt-[11px]">
          <span className="whitespace-nowrap">Grid Status</span>
          <span>8 / -1</span>
        </div>
      </div>
    </div>
  );
}
